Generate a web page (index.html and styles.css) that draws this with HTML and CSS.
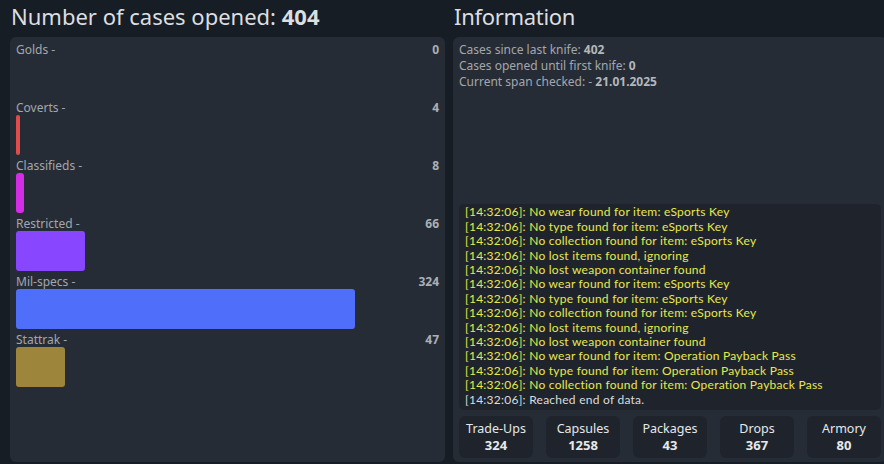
FILE: index.html
```html
<!DOCTYPE html>
<html>
<head>
<meta charset="utf-8">
<link rel="stylesheet" href="styles.css">
</head>
<body>
<div class="layout">
  <section class="col">
    <h1 class="title">Number of cases opened: <b>404</b></h1>
    <div class="panel rarity">
      <div class="row">
        <div class="row-head"><span>Golds -</span><b>0</b></div>
        <div class="bar-track"><div class="bar gold" style="width:0%"></div></div>
      </div>
      <div class="row">
        <div class="row-head"><span>Coverts -</span><b>4</b></div>
        <div class="bar-track"><div class="bar covert" style="width:0.99%"></div></div>
      </div>
      <div class="row">
        <div class="row-head"><span>Classifieds -</span><b>8</b></div>
        <div class="bar-track"><div class="bar classified" style="width:1.98%"></div></div>
      </div>
      <div class="row">
        <div class="row-head"><span>Restricted -</span><b>66</b></div>
        <div class="bar-track"><div class="bar restricted" style="width:16.34%"></div></div>
      </div>
      <div class="row">
        <div class="row-head"><span>Mil-specs -</span><b>324</b></div>
        <div class="bar-track"><div class="bar milspec" style="width:80.2%"></div></div>
      </div>
      <div class="row">
        <div class="row-head"><span>Stattrak -</span><b>47</b></div>
        <div class="bar-track"><div class="bar stattrak" style="width:11.63%"></div></div>
      </div>
    </div>
  </section>
  <section class="col">
    <h1 class="title">Information</h1>
    <div class="panel info">
      <div class="info-lines">
        <div>Cases since last knife: <b>402</b></div>
        <div>Cases opened until first knife: <b>0</b></div>
        <div>Current span checked: - <b>21.01.2025</b></div>
      </div>
      <div class="log">
        <div class="warn">[14:32:06]: No wear found for item: eSports Key</div>
        <div class="warn">[14:32:06]: No type found for item: eSports Key</div>
        <div class="warn">[14:32:06]: No collection found for item: eSports Key</div>
        <div class="warn">[14:32:06]: No lost items found, ignoring</div>
        <div class="warn">[14:32:06]: No lost weapon container found</div>
        <div class="warn">[14:32:06]: No wear found for item: eSports Key</div>
        <div class="warn">[14:32:06]: No type found for item: eSports Key</div>
        <div class="warn">[14:32:06]: No collection found for item: eSports Key</div>
        <div class="warn">[14:32:06]: No lost items found, ignoring</div>
        <div class="warn">[14:32:06]: No lost weapon container found</div>
        <div class="warn">[14:32:06]: No wear found for item: Operation Payback Pass</div>
        <div class="warn">[14:32:06]: No type found for item: Operation Payback Pass</div>
        <div class="warn">[14:32:06]: No collection found for item: Operation Payback Pass</div>
        <div class="ok">[14:32:06]: Reached end of data.</div>
      </div>
      <div class="stats">
        <div class="stat"><span>Trade-Ups</span><b>324</b></div>
        <div class="stat"><span>Capsules</span><b>1258</b></div>
        <div class="stat"><span>Packages</span><b>43</b></div>
        <div class="stat"><span>Drops</span><b>367</b></div>
        <div class="stat"><span>Armory</span><b>80</b></div>
      </div>
    </div>
  </section>
</div>
</body>
</html>
```
FILE: styles.css
```css
html, body {
  margin: 0;
  padding: 0;
  overflow: hidden;
  background: #171d25;
  font-family: "Noto Sans", "Open Sans", sans-serif;
  color: #a3a7ad;
}
.layout {
  display: grid;
  grid-template-columns: 435px 434px;
  column-gap: 8px;
  padding-left: 10px;
  height: 464px;
  width: 900px;
}
.col {
  display: flex;
  flex-direction: column;
  min-height: 0;
}
.title {
  margin: 0;
  height: 37px;
  box-sizing: border-box;
  padding-left: 1px;
  padding-top: 1px;
  font-size: 22px;
  line-height: 30px;
  font-weight: 400;
  color: #dcdee0;
}
.title b { font-weight: 700; }
.col + .col .title { letter-spacing: -0.3px; }
.panel {
  background: #262c36;
  border-radius: 6px;
  height: 425px;
  box-sizing: border-box;
  padding: 5px 6px 4px;
}
.rarity {
  display: flex;
  flex-direction: column;
}
.row-head {
  display: flex;
  justify-content: space-between;
  font-size: 12px;
  line-height: 15px;
}
.row-head b { color: #aab0b6; }
.bar-track {
  height: 40px;
  margin-bottom: 3px;
}
.bar {
  height: 40px;
  border-radius: 3px;
}
.gold { background: #e4ae39; }
.covert { background: #e04b4b; }
.classified { background: #d32ee6; }
.restricted { background: #8847ff; }
.milspec { background: #4f6ffa; }
.stattrak { background: #9d863c; }
.info {
  display: flex;
  flex-direction: column;
}
.info-lines {
  font-size: 12px;
  line-height: 16px;
  flex: 1;
}
.info-lines b { color: #b3b8bd; }
.log {
  background: #1f242c;
  border-radius: 5px;
  padding: 1px 6px 3px;
  font-family: Lato, "Noto Sans", sans-serif;
  font-size: 12px;
  line-height: 14.4px;
  letter-spacing: 0.25px;
  color: #e8e84e;
}
.log .ok { color: #dadcdf; }
.stats {
  display: flex;
  gap: 13px;
  margin-top: 6px;
}
.stat {
  width: 74px;
  height: 42px;
  background: #1f242c;
  border-radius: 6px;
  display: flex;
  flex-direction: column;
  align-items: center;
  justify-content: center;
  font-size: 12.5px;
  line-height: 16px;
  color: #e6e8ea;
}
.stat b { font-size: 13px; }
```
